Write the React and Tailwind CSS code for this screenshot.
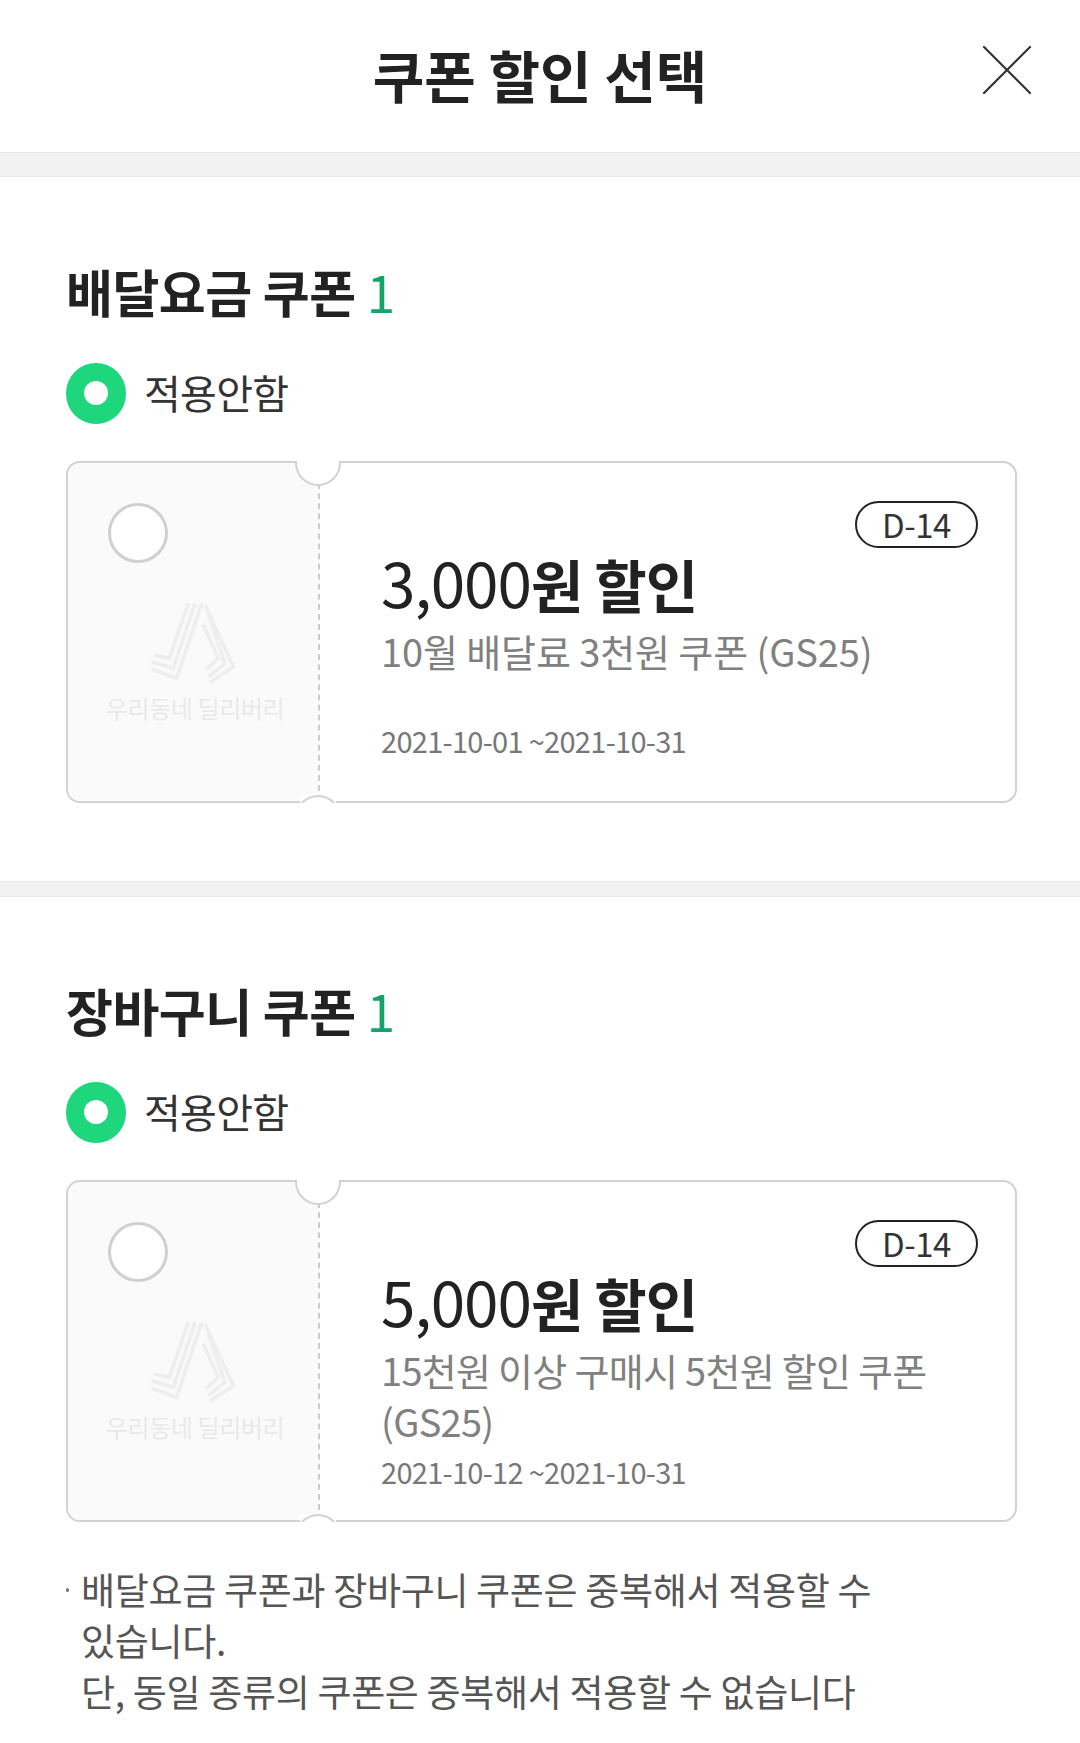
const font = { fontFamily: '"Noto Sans CJK KR", "Noto Sans", sans-serif' }

const coupons = {
  delivery: {
    amount: '3,000',
    desc: '10월 배달료 3천원 쿠폰 (GS25)',
    descClass: 'tracking-[-0.1px]',
    period: '2021-10-01 ~2021-10-31',
  },
  basket: {
    amount: '5,000',
    desc: '15천원 이상 구매시 5천원 할인 쿠폰 (GS25)',
    descClass: 'tracking-[-0.7px]',
    period: '2021-10-12 ~2021-10-31',
  },
}

const CloseIcon = () => (
  <svg width="50" height="50" viewBox="0 0 50 50" fill="none" stroke="#333" strokeWidth="2.2" strokeLinecap="round">
    <path d="M2 2 L48 48" />
    <path d="M48 2 L2 48" />
  </svg>
)

const Watermark = () => (
  <div className="flex flex-col items-center">
    <svg className="mr-[10px]" width="100" height="100" viewBox="0 0 300 300" fill="none" stroke="#eeeeee" strokeWidth="11">
      <path d="M145 25 L88 190 L42 180" />
      <path d="M165 25 L100 220 L35 200" />
      <path d="M185 25 L110 250 L35 222" />
      <path d="M190 90 L235 190 L200 222" />
      <path d="M205 60 L255 205 L205 245" />
      <path d="M195 30 L280 215 L210 262" />
    </svg>
    <span className="-mt-[5px] text-[24px] leading-[36px] tracking-[-0.4px] text-[#e9e9e9] whitespace-nowrap">우리동네 딜리버리</span>
  </div>
)

const Ticket = ({ coupon, dateGap }) => (
  <div className="relative flex h-[342px] rounded-[14px] border-2 border-[#d2d2d2] bg-white">
    <div className="w-[250px] shrink-0 rounded-l-[12px] bg-[#fafafa] pl-[40px] pt-[40px]">
      <div className="h-[60px] w-[60px] rounded-full border-[3px] border-[#d0d0d0] bg-white" />
      <div className="-ml-[13px] mt-[32px] w-[200px]">
        <Watermark />
      </div>
    </div>
    <div className="border-l-2 border-dashed border-[#cccccc]" />
    <div className="flex-1 pl-[61px] pr-[37px] pt-[38px]">
      <div className="flex justify-end">
        <span className="flex h-[47px] w-[123px] items-center justify-center rounded-full border-2 border-[#222] text-[33px] leading-none tracking-[-0.5px] text-[#333]">
          D-14
        </span>
      </div>
      <div className="-mt-[7px] text-[62px] leading-[80px] tracking-[-1px] text-[#222]">
        {coupon.amount}
        <span className="text-[57px] font-bold">원 할인</span>
      </div>
      <p className={`mt-[2px] text-[38px] leading-[51px] text-[#808080] ${coupon.descClass}`}>{coupon.desc}</p>
      <p className={`${dateGap} text-[29px] leading-[40px] tracking-[-0.7px] text-[#777]`}>{coupon.period}</p>
    </div>
    {/* 티켓 노치 */}
    <span className="absolute -top-[2px] left-[227px] h-[25px] w-[46px] rounded-b-full border-2 border-t-0 border-[#d2d2d2] bg-white" />
    <span className="absolute -bottom-[2px] left-[232px] h-[8px] w-[36px] overflow-hidden bg-white">
      <span className="absolute -left-[5px] top-0 block h-[46px] w-[46px] rounded-full border-2 border-[#d2d2d2]" />
    </span>
  </div>
)

const CouponSection = ({ title, coupon, dateGap }) => (
  <section className="pl-[66px] pr-[63px]">
    <h2 className="-mt-[4px] text-[51px] font-bold leading-[70px] tracking-[-0.5px] text-[#222]">
      {title} <span className="font-normal text-[#15a368]">1</span>
    </h2>
    <div className="mt-[36px] flex h-[62px] items-center gap-[18px]">
      <span className="flex h-[61px] w-[60px] items-center justify-center rounded-full bg-[#1ed67c]">
        <span className="h-[24px] w-[24px] rounded-full bg-white" />
      </span>
      <span className="-mt-[2px] text-[40px] leading-[56px] tracking-[-0.7px] text-[#333]">적용안함</span>
    </div>
    <div className="mt-[37px]">
      <Ticket coupon={coupon} dateGap={dateGap} />
    </div>
  </section>
)

export default function App() {
  return (
    <div className="h-[1743px] w-[1080px] overflow-hidden bg-white" style={font}>
      <header className="relative flex h-[152px] items-center justify-center pb-[4px]">
        <h1 className="text-[56px] font-bold leading-none text-[#222]">쿠폰 할인 선택</h1>
        <span className="absolute right-[48px] top-[45px]">
          <CloseIcon />
        </span>
      </header>
      <div className="h-[25px] border-y border-[#e9e9e9] bg-[#f2f2f2]" />

      <div className="pt-[83px]">
        <CouponSection title="배달요금 쿠폰" coupon={coupons.delivery} dateGap="mt-[44px]" />
      </div>

      <div className="mt-[78px] h-[16px] border-y border-[#e9e9e9] bg-[#f2f2f2]" />

      <div className="pt-[82px]">
        <CouponSection title="장바구니 쿠폰" coupon={coupons.basket} dateGap="mt-[5px]" />
      </div>

      <div className="mt-[42px] flex pl-[66px] pr-[190px] text-[37px] leading-[51px] tracking-[-0.3px] text-[#555]">
        <span className="mr-[12px] mt-[24px] h-[4px] w-[3px] shrink-0 rounded-full bg-[#777]" />
        <p>
          배달요금 쿠폰과 장바구니 쿠폰은 중복해서 적용할 수 있습니다.
          <br />
          단, 동일 종류의 쿠폰은 중복해서 적용할 수 없습니다
        </p>
      </div>
    </div>
  )
}
